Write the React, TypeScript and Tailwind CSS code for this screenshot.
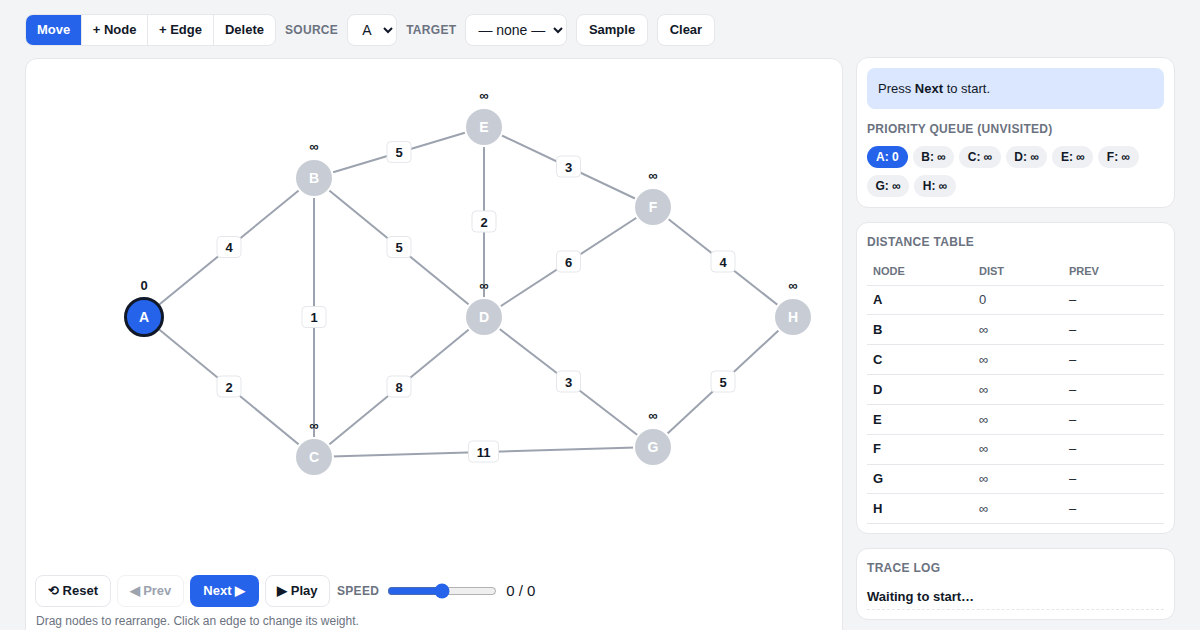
import { useState } from 'react'

type Node = { id: string; x: number; y: number }
type Edge = { a: string; b: string; w: number }

// svg coordinates are relative to the canvas card's inner box
const nodes: Node[] = [
  { id: 'A', x: 118, y: 258 },
  { id: 'B', x: 288, y: 119 },
  { id: 'C', x: 288, y: 398 },
  { id: 'D', x: 458, y: 258 },
  { id: 'E', x: 458, y: 68 },
  { id: 'F', x: 627, y: 148 },
  { id: 'G', x: 627, y: 388 },
  { id: 'H', x: 767, y: 258 },
]

const edges: Edge[] = [
  { a: 'A', b: 'B', w: 4 },
  { a: 'A', b: 'C', w: 2 },
  { a: 'B', b: 'E', w: 5 },
  { a: 'B', b: 'C', w: 1 },
  { a: 'B', b: 'D', w: 5 },
  { a: 'E', b: 'D', w: 2 },
  { a: 'E', b: 'F', w: 3 },
  { a: 'D', b: 'F', w: 6 },
  { a: 'C', b: 'D', w: 8 },
  { a: 'D', b: 'G', w: 3 },
  { a: 'C', b: 'G', w: 11 },
  { a: 'F', b: 'H', w: 4 },
  { a: 'G', b: 'H', w: 5 },
]

const byId = (id: string) => nodes.find((n) => n.id === id)!

const dist: Record<string, string> = { A: '0', B: '∞', C: '∞', D: '∞', E: '∞', F: '∞', G: '∞', H: '∞' }

export default function App() {
  const [speed, setSpeed] = useState(50)

  return (
    <div className="min-h-screen bg-[#f3f4f6] px-6 pt-[14px] font-['Liberation_Sans',Arial,sans-serif] text-[#111827]">
      {/* Toolbar */}
      <div className="flex items-center h-8 gap-[9px] ml-px">
        <div className="flex h-8 rounded-lg border border-[#e5e7eb] bg-white overflow-hidden text-[13px] font-bold">
          <button className="px-[11px] bg-[#2563eb] text-white">Move</button>
          <button className="px-[10.5px] border-l border-[#e5e7eb]">+ Node</button>
          <button className="px-[11px] border-l border-[#e5e7eb]">+ Edge</button>
          <button className="px-[11px] border-l border-[#e5e7eb]">Delete</button>
        </div>
        <span className="text-xs font-bold text-[#6b7280] tracking-wide">SOURCE</span>
        <select className="h-8 w-[50px] rounded-lg border border-[#e5e7eb] bg-white pl-[10px] text-sm" defaultValue="A">
          <option>A</option>
        </select>
        <span className="text-xs font-bold text-[#6b7280] tracking-wide">TARGET</span>
        <select className="h-8 w-[102px] rounded-lg border border-[#e5e7eb] bg-white pl-[8px] text-sm">
          <option>— none —</option>
        </select>
        <button className="h-8 px-[11.5px] rounded-lg border border-[#e5e7eb] bg-white text-[13px] font-bold">Sample</button>
        <button className="h-8 px-[12px] rounded-lg border border-[#e5e7eb] bg-white text-[13px] font-bold">Clear</button>
      </div>

      <div className="mt-3 flex items-start gap-[13px] ml-px">
        {/* Canvas card */}
        <div className="w-[818px] h-[600px] shrink-0 rounded-xl border border-[#e5e7eb] bg-white">
          <svg width={816} height={516} className="block">
            {edges.map((e) => {
              const p = byId(e.a)
              const q = byId(e.b)
              return (
                <line key={e.a + e.b} x1={p.x} y1={p.y} x2={q.x} y2={q.y} stroke="#9ca3af" strokeWidth={2} />
              )
            })}
            {edges.map((e) => {
              const p = byId(e.a)
              const q = byId(e.b)
              const mx = (p.x + q.x) / 2
              const my = (p.y + q.y) / 2
              const w = e.w > 9 ? 30 : 24
              return (
                <g key={'l' + e.a + e.b}>
                  <rect x={mx - w / 2} y={my - 11} width={w} height={21} rx={4} fill="#fff" stroke="#e5e7eb" />
                  <text x={mx} y={my + 4.5} textAnchor="middle" fontSize={13} fontWeight={700} fill="#111827">
                    {e.w}
                  </text>
                </g>
              )
            })}
            {nodes.map((n) => {
              const src = n.id === 'A'
              return (
                <g key={n.id}>
                  <circle
                    cx={n.x}
                    cy={n.y}
                    r={src ? 18.5 : 19}
                    fill={src ? '#2563eb' : '#c8cdd5'}
                    stroke={src ? '#111827' : '#ffffff'}
                    strokeWidth={src ? 3 : 2}
                  />
                  <text x={n.x} y={n.y + 5} textAnchor="middle" fontSize={14} fontWeight={700} fill="#fff">
                    {n.id}
                  </text>
                  <text x={n.x} y={n.y - 27} textAnchor="middle" fontSize={13} fontWeight={700} fill="#111827">
                    {dist[n.id]}
                  </text>
                </g>
              )
            })}
          </svg>

          <div className="flex items-center h-8 px-[9px] gap-[6px] text-[13px] font-bold">
            <button className="h-8 px-[12px] rounded-lg border border-[#e5e7eb] bg-white">⟲ Reset</button>
            <button className="h-8 px-[11.5px] rounded-lg border border-[#f0f1f3] bg-white text-[#9ca3af]">◀ Prev</button>
            <button className="h-8 px-[13.5px] rounded-lg bg-[#2563eb] text-white">Next ▶</button>
            <button className="h-8 px-[11.5px] rounded-lg border border-[#e5e7eb] bg-white">▶ Play</button>
            <span className="ml-px text-xs text-[#6b7280] tracking-wide">SPEED</span>
            <input
              type="range"
              min={0}
              max={100}
              value={speed}
              onChange={(e) => setSpeed(Number(e.target.value))}
              className="w-[110px] ml-[2px] accent-[#2563eb]"
            />
            <span className="ml-[3px] text-[15px] font-normal">0 / 0</span>
          </div>
          <div className="px-[10px] mt-[6px] text-xs text-[#6b7280]">
            Drag nodes to rearrange. Click an edge to change its weight.
          </div>
        </div>

        {/* Side panel */}
        <div className="w-[319px] flex flex-col gap-[14px] -mt-px">
          <div className="rounded-xl border border-[#e5e7eb] bg-white p-[10px]">
            <div className="h-[41px] rounded-lg bg-[#dbe7fe] px-[11px] flex items-center text-[13px]">
              <span>
                Press <b>Next</b> to start.
              </span>
            </div>
            <div className="mt-[12px] text-xs font-bold text-[#6b7280] tracking-wide">PRIORITY QUEUE (UNVISITED)</div>
            <div className="mt-[9px] flex flex-wrap gap-x-[5px] gap-y-[7px] text-xs font-bold">
              {Object.entries(dist).map(([k, v]) => (
                <span
                  key={k}
                  className={
                    k === 'A'
                      ? 'h-[22px] px-[9px] rounded-full bg-[#2563eb] text-white flex items-center'
                      : 'h-[22px] px-[8.5px] rounded-full bg-[#eef0f3] flex items-center'
                  }
                >
                  {k}: {v}
                </span>
              ))}
            </div>
          </div>

          <div className="rounded-xl border border-[#e5e7eb] bg-white px-[10px] pt-[11px] pb-[9px]">
            <div className="text-xs font-bold text-[#6b7280] tracking-wide">DISTANCE TABLE</div>
            <table className="mt-[8px] w-full text-[13px]">
              <thead>
                <tr className="border-b border-[#e5e7eb] text-[11px] font-bold text-[#6b7280] text-left">
                  <th className="h-[27px] pl-[6px] w-[112px]">NODE</th>
                  <th className="w-[90px]">DIST</th>
                  <th>PREV</th>
                </tr>
              </thead>
              <tbody>
                {Object.entries(dist).map(([k, v]) => (
                  <tr key={k} className="border-b border-[#e5e7eb]">
                    <td className="h-[29.85px] pl-[6px] font-bold">{k}</td>
                    <td className="text-[#374151]">{v}</td>
                    <td>–</td>
                  </tr>
                ))}
              </tbody>
            </table>
          </div>

          <div className="rounded-xl border border-[#e5e7eb] bg-white px-[10px] pt-[11px] pb-[9px]">
            <div className="text-xs font-bold text-[#6b7280] tracking-wide">TRACE LOG</div>
            <div className="mt-[11px] pb-[2px] border-b border-dashed border-[#e5e7eb] text-[13px] font-bold">
              Waiting to start…
            </div>
          </div>
        </div>
      </div>
    </div>
  )
}
